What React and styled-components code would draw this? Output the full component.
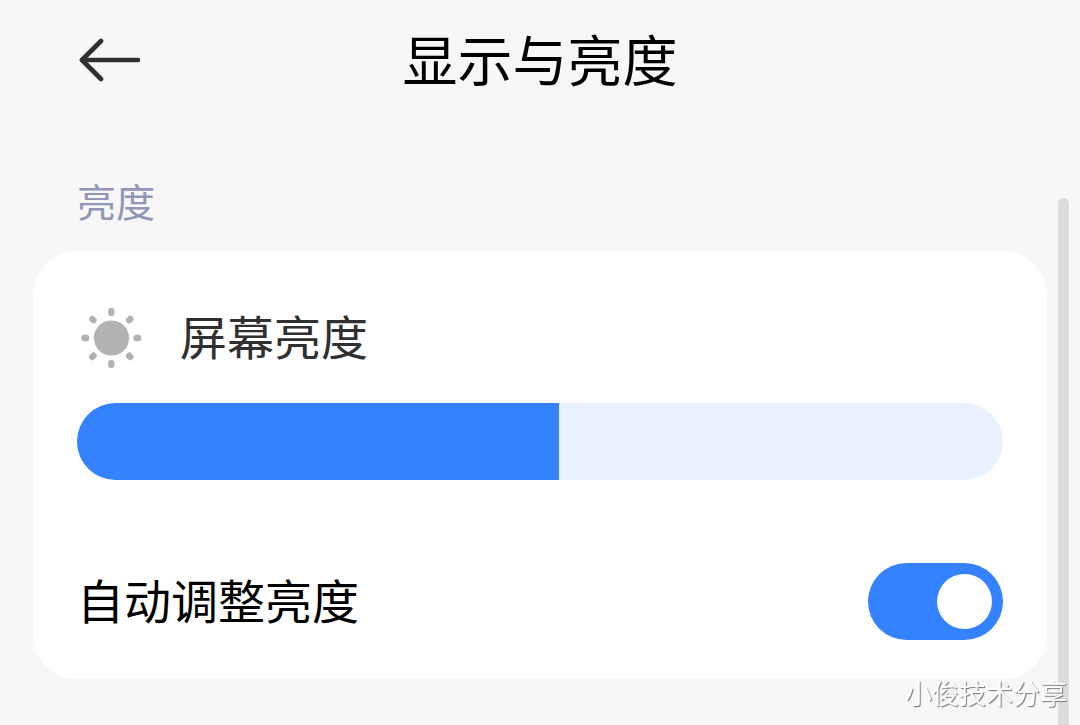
import React from 'react';
import styled, { createGlobalStyle } from 'styled-components';

const GlobalStyle = createGlobalStyle`
body {
margin: 0;
background-color: #f7f7f7;
font-family: "Noto Sans CJK SC", sans-serif;
overflow: hidden;
}
`

const Page = styled.main`
box-sizing: border-box;
width: 100%;
min-height: 100vh;
padding: 0 33px 44px;
`

const Header = styled.header`
display: grid;
grid-template-columns: 1fr auto 1fr;
align-items: center;
height: 120px;
padding: 0 44px;
`

const BackButton = styled.button`
display: flex;
justify-self: start;
padding: 0;
border: 0;
background: none;
cursor: pointer;
`

const Title = styled.h1`
margin: 0;
padding-bottom: 6px;
font-size: 55px;
line-height: 80px;
font-weight: 400;
color: #000;
`

const SectionTitle = styled.h2`
margin: 56px 0 27px;
padding: 0 44px;
font-size: 39px;
line-height: 48px;
font-weight: 400;
color: #8f96b8;
`

const Card = styled.section`
padding: 49px 44px 39px;
border-radius: 44px;
background-color: #fff;
`

const SliderLabel = styled.label`
display: flex;
align-items: center;
gap: 35px;
height: 76px;
color: #303030;
`

const RowText = styled.span`
padding-bottom: 6px;
font-size: 47px;
line-height: 70px;
`

const Slider = styled.input`
appearance: none;
display: block;
width: 100%;
height: 77px;
margin: 27px 0 83px;
border-radius: 39px;
cursor: pointer;
&::-webkit-slider-thumb {
appearance: none;
width: 1px;
height: 77px;
background: transparent;
}
`

const SwitchRow = styled.label`
display: flex;
align-items: center;
justify-content: space-between;
height: 77px;
color: #000;
`

const Switch = styled.input`
appearance: none;
display: flex;
align-items: center;
justify-content: ${props => props.checked ? 'flex-end' : 'flex-start'};
box-sizing: border-box;
width: 135px;
height: 77px;
margin: 0;
padding: 0 11px;
border-radius: 39px;
background-color: ${props => props.checked ? '#3482ff' : '#e0e0e0'};
cursor: pointer;
&::before {
content: "";
width: 55px;
height: 55px;
border-radius: 50%;
background-color: #fff;
}
`

const ScrollBar = styled.div`
position: fixed;
top: 198px;
right: 11px;
bottom: -11px;
width: 11px;
border-radius: 6px;
background-color: #dcdcdc;
`

const Watermark = styled.div`
position: fixed;
right: 13px;
bottom: 12px;
font-size: 27px;
line-height: 40px;
font-weight: 400;
color: #fff;
text-shadow: 1px 1px 1px #777;
`

function BackIcon() {
    return (
        <svg width="64" height="44" viewBox="0 0 64 44" fill="none" stroke="#303030"
            strokeWidth="4.6" strokeLinecap="round" strokeLinejoin="round">
            <path d="M24 3 L5 22 L24 41" />
            <path d="M5 22 H61" />
        </svg>
    )
}

function SunIcon() {
    return (
        <svg width="68" height="68" viewBox="-34 -34 68 68" fill="#b2b2b2">
            <circle cx="0.5" r="17.6" />
            {[0, 45, 90, 135, 180, 225, 270, 315].map(angle => (
                <rect key={angle} x="-3.2" y="-30" width="6.4" height="8" rx="3"
                    transform={'translate(0.3 0) rotate(' + angle + ')'} />
            ))}
        </svg>
    )
}

function App() {
    const [brightness, setBrightness] = React.useState(52);
    const [auto, setAuto] = React.useState(true);

    const track = 'linear-gradient(to right, #3482ff ' + brightness + '%, #e9f1ff ' + brightness + '%)'

    return (
        <Page>
            <GlobalStyle />
            <Header>
                <BackButton type="button" aria-label="返回">
                    <BackIcon />
                </BackButton>
                <Title>显示与亮度</Title>
            </Header>

            <SectionTitle>亮度</SectionTitle>
            <Card>
                <SliderLabel htmlFor="brightness">
                    <SunIcon />
                    <RowText>屏幕亮度</RowText>
                </SliderLabel>
                <Slider id="brightness" type="range" min="0" max="100" value={brightness}
                    style={{ background: track }}
                    onChange={(e) => setBrightness(Number(e.currentTarget.value))} />
                <SwitchRow htmlFor="auto">
                    <RowText>自动调整亮度</RowText>
                    <Switch id="auto" type="checkbox" checked={auto}
                        onChange={(e) => setAuto(e.currentTarget.checked)} />
                </SwitchRow>
            </Card>

            <ScrollBar />
            <Watermark>小俊技术分享</Watermark>
        </Page>
    )
}

export default App;
